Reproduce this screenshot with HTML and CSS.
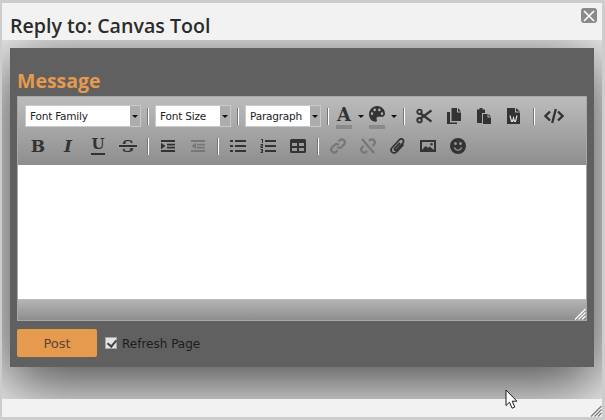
FILE: index.html
```html
<!DOCTYPE html>
<html>
<head>
  <title>Reply to: Canvas Tool</title>
  <link rel="stylesheet" href="styles.css">
</head>
<body>
  <div class="dialog">
    <div class="dialog-head">
      <h1>Reply to: Canvas Tool</h1>
      <button class="close" type="button">
        <svg width="12" height="12" viewBox="0 0 12 12"><path d="M1 1l10 10M11 1L1 11" stroke="#fff" stroke-width="1.6" fill="none"/></svg>
      </button>
    </div>
    <div class="dialog-body">
      <form class="panel">
        <h2>Message</h2>
        <div class="editor">
          <div class="toolbar">
            <div class="tool-row">
              <div class="select wide"><span>Font Family</span><i class="select-arrow"></i></div>
              <b class="sep"></b>
              <div class="select"><span>Font Size</span><i class="select-arrow"></i></div>
              <b class="sep"></b>
              <div class="select"><span>Paragraph</span><i class="select-arrow"></i></div>
              <b class="sep"></b>
              <div class="split">
                <span class="swatch"><span class="glyph glyph-a">A</span></span>
                <i class="caret"></i>
              </div>
              <div class="split">
                <span class="swatch">
                  <svg width="16" height="16" viewBox="0 0 16 14.200" preserveAspectRatio="none"><path fill-rule="evenodd" d="M8 0C3.600 0 0 3.300 0 7.400 0 11 2.900 14 6.400 14c1.600 0 1.900-1 1.300-2-.6-1.100 0-2.400 1.500-2.400h3.300C14.700 9.600 16 8.400 16 6.600 16 2.900 12.400 0 8 0zM3 8a1.200 1.200 0 1 1 0-2.400A1.200 1.200 0 0 1 3 8zm2.700-3.300a1.200 1.200 0 1 1 0-2.400 1.200 1.200 0 0 1 0 2.400zm4.600 0a1.200 1.200 0 1 1 0-2.400 1.200 1.200 0 0 1 0 2.400zM13 8a1.200 1.200 0 1 1 0-2.400A1.200 1.200 0 0 1 13 8z" fill="#333"/></svg>
                </span>
                <i class="caret"></i>
              </div>
              <b class="sep"></b>
              <span class="btn"><svg width="16" height="16" viewBox="0 0 16 16"><path d="M4.500 5.500L15.500 13.500M4.500 10.500L15.500 2.500" stroke="#333" stroke-width="2.200" fill="none"/><circle cx="3.500" cy="3.800" r="2.200" stroke="#333" stroke-width="1.900" fill="none"/><circle cx="3.500" cy="12.200" r="2.200" stroke="#333" stroke-width="1.900" fill="none"/></svg></span>
              <span class="btn"><svg width="16" height="16" viewBox="0 0 16 16"><path d="M5.500 0h5.500v4.500h4V13H5.500z" fill="#333"/><path d="M12 0l3 3.500h-3z" fill="#333"/><path d="M1 4h3v10.500h7V16H1z" fill="#333"/></svg></span>
              <span class="btn"><svg width="16" height="16" viewBox="0 0 16 16"><path d="M1 1.500h2.500V0h3v1.500H9V5H6v10H1z" fill="#333"/><path d="M7 6h4.500v3.500H15V16H7z" fill="#333"/><path d="M12.500 6L15 8.500h-2.500z" fill="#333"/></svg></span>
              <span class="btn"><svg width="16" height="16" viewBox="0 0 16 16"><path d="M1 0h8v4.500h5V16H1z" fill="#333"/><path d="M10 0l4 3.500h-4z" fill="#333"/><path d="M4 7.500l1.500 6h1L7.500 10l1 3.500h1l1.500-6" fill="none" stroke="#ddd" stroke-width="1.200"/></svg></span>
              <b class="sep"></b>
              <span class="btn"><svg width="20" height="16" viewBox="0 0 20 16"><path d="M6 3.500L1.500 8 6 12.500M14 3.500L18.500 8 14 12.500M11.800 1L8.200 15" stroke="#333" stroke-width="2.300" fill="none"/></svg></span>
            </div>
            <div class="tool-row">
              <span class="btn"><span class="glyph">B</span></span>
              <span class="btn"><span class="glyph glyph-i">I</span></span>
              <span class="btn"><span class="glyph glyph-u">U</span></span>
              <span class="btn"><span class="glyph glyph-s">S</span></span>
              <b class="sep"></b>
              <span class="btn"><svg width="16" height="16" viewBox="0 0 16 16"><path d="M1 2h14v2H1zM7 5.800h8v1.700H7zM7 8.800h8v1.700H7zM1 12h14v2H1zM1 4.800L5.500 8 1 11.200z" fill="#333"/></svg></span>
              <span class="btn off"><svg width="16" height="16" viewBox="0 0 16 16"><path d="M1 2h14v2H1zM7 5.800h8v1.700H7zM7 8.800h8v1.700H7zM1 12h14v2H1zM6 4.800L1.500 8 6 11.200z" fill="#777"/></svg></span>
              <b class="sep"></b>
              <span class="btn"><svg width="16" height="16" viewBox="0 0 16 16"><path d="M5 2h11v2H5zM5 7h11v2H5zM5 12h11v2H5z" fill="#333"/><path d="M0 2h3v2H0zM0 7h3v2H0zM0 12h3v2H0z" fill="#333"/></svg></span>
              <span class="btn"><svg width="16" height="16" viewBox="0 0 16 16"><path d="M5 2h11v2H5zM5 7h11v2H5zM5 12h11v2H5z" fill="#333"/><path d="M1 1h2v4H2V2H1zM.5 6H3v2.500H1.500V9H3v1H.5V7.500H2V7H.5zM.5 11H3v4H.5v-1H2v-.5H1v-1h1V12H.5z" fill="#333"/></svg></span>
              <span class="btn"><svg width="16" height="16" viewBox="0 0 16 16"><path fill-rule="evenodd" d="M1.500 1h13A1.500 1.500 0 0 1 16 2.500v11a1.500 1.500 0 0 1-1.500 1.500h-13A1.500 1.500 0 0 1 0 13.500v-11A1.500 1.500 0 0 1 1.500 1zM2 5v3h5V5zM9 5v3h5V5zM2 10v3h5v-3zM9 10v3h5v-3z" fill="#333"/></svg></span>
              <b class="sep"></b>
              <span class="btn off"><svg width="16" height="16" viewBox="0 0 16 16"><g stroke="#777" stroke-width="2.200" fill="none"><path d="M8.500 3.500l1.500-1.500a3 3 0 0 1 4.200 4.200L11.500 9a3 3 0 0 1-4.200 0"/><path d="M7.500 12.500L6 14a3 3 0 0 1-4.200-4.200L4.500 7a3 3 0 0 1 4.200 0"/></g></svg></span>
              <span class="btn off"><svg width="16" height="16" viewBox="0 0 16 16"><g stroke="#777" stroke-width="2.200" fill="none"><path d="M9 3l1-1a3 3 0 0 1 4.200 4.200L12.500 8"/><path d="M7 13l-1 1a3 3 0 0 1-4.200-4.200L3.500 8"/><path d="M2 1l12 14"/></g></svg></span>
              <span class="btn"><svg width="16" height="16" viewBox="0 0 16 16"><path d="M13.500 6.500L7 13.500c-1.500 1.700-4 1.800-5.200.5C.7 12.800.8 11 2.200 9.500l7-7.500c1.100-1.200 2.700-1.300 3.700-.4s.9 2.400-.1 3.500l-6 6.600c-.6.700-1.500.7-2 .2s-.4-1.200.2-1.900L10 5" stroke="#333" stroke-width="1.800" fill="none"/></svg></span>
              <span class="btn"><svg width="16" height="16" viewBox="0 0 16 16"><path fill-rule="evenodd" d="M0 2h16v12H0zM2 4v8l3.500-4 2.500 2 1.500-1.500L14 12V4zM11.500 5a1.300 1.300 0 1 1 0 2.600 1.300 1.300 0 0 1 0-2.600z" fill="#333"/></svg></span>
              <span class="btn"><svg width="16" height="16" viewBox="0 0 16 16"><path fill-rule="evenodd" d="M8 0a8 8 0 1 1 0 16A8 8 0 0 1 8 0zM5.500 4a1.300 1.500 0 1 0 0 3 1.300 1.500 0 0 0 0-3zm5 0a1.300 1.500 0 1 0 0 3 1.300 1.500 0 0 0 0-3zM3.800 9.500c.5 2 2.200 3.300 4.200 3.300s3.700-1.300 4.200-3.300l-1.300-.300c-.4 1.400-1.500 2.300-2.900 2.300s-2.500-.9-2.900-2.300z" fill="#333"/></svg></span>
            </div>
          </div>
          <div class="edit-area"></div>
          <div class="status">
            <svg class="grip" width="12" height="12" viewBox="0 0 12 12"><path d="M11.500 1L1 11.500M11.500 4.500L4.500 11.500M11.500 8L8 11.500" stroke="#fff" stroke-width="1.100" fill="none"/></svg>
          </div>
        </div>
        <div class="actions">
          <button class="post" type="button">Post</button>
          <label class="refresh"><input type="checkbox" checked> <span>Refresh Page</span></label>
        </div>
      </form>
    </div>
    <div class="dialog-foot">
      <svg class="grip" width="12" height="12" viewBox="0 0 12 12"><path d="M11.500 1L1 11.500M11.500 4.500L4.500 11.500M11.500 8L8 11.500" stroke="#777" stroke-width="1.100" fill="none"/></svg>
    </div>
  </div>
  <svg class="pointer" width="13" height="21" viewBox="0 0 13 21"><path d="M1 1v15.500l3.500-3.300 2.600 6 2.700-1.200-2.600-5.800h4.700z" fill="#fff" stroke="#1a1a2a" stroke-width="1"/></svg>
</body>
</html>
```

FILE: styles.css
```css
* {
  box-sizing: border-box;
}
body {
  margin: 0;
  height: 420px;
  padding: 3px 3px 3px 2px;
  background-color: #cdcdcd;
  overflow: hidden;
  font-family: 'DejaVu Sans', sans-serif;
}
.dialog {
  display: flex;
  flex-direction: column;
  height: 414px;
  background-color: #f2f2f2;
}
.dialog-head {
  display: flex;
  justify-content: space-between;
  height: 37px;
  padding: 5px 5px 0 8px;
}
h1 {
  margin: 4px 0 0;
  font-family: 'Open Sans', sans-serif;
  font-size: 19.6px;
  font-weight: 600;
  line-height: 27px;
  color: #2b2b2b;
}
.close {
  display: flex;
  align-items: center;
  justify-content: center;
  width: 16px;
  height: 15px;
  padding: 0;
  border: 0;
  border-radius: 3px;
  background-color: #8a8a8a;
}
.dialog-body {
  height: 359px;
  padding: 8px;
  overflow: hidden;
}
.panel {
  height: 319px;
  padding: 0 7px;
  background-color: #606060;
  box-shadow: 0 15px 60px 5px rgba(0, 0, 0, 0.7);
}
h2 {
  margin: 0;
  height: 48px;
  padding-top: 19px;
  font-family: 'Open Sans', sans-serif;
  font-size: 19.5px;
  font-weight: 700;
  line-height: 27px;
  color: #e59a4e;
}
.editor {
  width: 570px;
  height: 225px;
  border: 1px solid #a8a8a8;
  display: flex;
  flex-direction: column;
}
.toolbar {
  height: 68px;
  padding: 4px 5px;
  background: linear-gradient(#bcbcbc, #8e8e8e);
}
.tool-row {
  display: flex;
  align-items: center;
  height: 30px;
}
.select {
  display: flex;
  justify-content: space-between;
  width: 76px;
  height: 22px;
  margin: 0 2px;
  border: 1px solid #c9c9c9;
  background-color: #fff;
  font-size: 10.5px;
  letter-spacing: -0.2px;
  line-height: 21px;
  color: #222;
}
.select.wide {
  width: 116px;
}
.select span {
  padding-left: 4px;
}
.select-arrow {
  display: flex;
  align-items: center;
  justify-content: center;
  width: 10px;
  background-color: #adadad;
}
.select-arrow::after,
.caret::after {
  content: "";
  border-top: 3px solid #111;
  border-left: 3px solid transparent;
  border-right: 3px solid transparent;
}
.sep {
  width: 10px;
  height: 17px;
  flex: none;
  background: linear-gradient(#fff, #fff) 5px 0 / 1px 100% no-repeat,
    linear-gradient(#777, #777) 4px 0 / 1px 100% no-repeat;
}
.btn {
  display: flex;
  align-items: center;
  justify-content: center;
  width: 30px;
  height: 30px;
  flex: none;
}
.split {
  display: flex;
  align-items: center;
  width: 33px;
  height: 30px;
  flex: none;
}
.swatch {
  display: flex;
  flex-direction: column;
  align-items: center;
  width: 16px;
  height: 23px;
  margin: 2px 3px 0;
  border-bottom: 4px solid #8a8a8a;
}
.caret {
  display: flex;
  align-items: center;
  justify-content: center;
  width: 11px;
}
.glyph {
  position: relative;
  display: block;
  font-family: 'DejaVu Serif', serif;
  font-weight: 700;
  font-size: 17px;
  line-height: 20px;
  color: #333;
}
.glyph-a {
  font-size: 18px;
  line-height: 17px;
}
.glyph-i {
  font-style: italic;
}
.glyph-u {
  width: 14px;
  height: 18px;
  margin-top: -1px;
  border-bottom: 2px solid #333;
  font-size: 15px;
  line-height: 15px;
  text-align: center;
}
.glyph-s::after {
  content: "";
  position: absolute;
  left: -3px;
  right: -3px;
  top: 9px;
  height: 2px;
  background-color: #333;
  box-shadow: 0 0 0 1px #a0a0a0;
}
.edit-area {
  height: 134px;
  background-color: #fff;
}
.status {
  position: relative;
  flex: 1;
  border-top: 1px solid #bbb;
  background: linear-gradient(#b4b4b4, #8e8e8e);
}
.grip {
  position: absolute;
  right: 0;
  bottom: 0;
}
.actions {
  display: flex;
  align-items: center;
  height: 28px;
  margin-top: 8px;
}
.post {
  width: 80px;
  height: 28px;
  padding: 0;
  border: 0;
  border-radius: 2px;
  background-color: #e59a4e;
  font-family: 'DejaVu Sans', sans-serif;
  font-size: 13px;
  color: #5c4536;
}
.refresh {
  display: flex;
  align-items: center;
  gap: 5px;
  margin-left: 8px;
  font-size: 12px;
  color: #1c1c1c;
}
.refresh span {
  padding-top: 2px;
}
.refresh input {
  position: relative;
  appearance: none;
  width: 12px;
  height: 12px;
  margin: 0;
  border: 1px solid #a5a5a5;
  background-color: #e4e4e4;
}
.refresh input::after {
  content: "";
  position: absolute;
  left: 3px;
  top: 0;
  width: 4px;
  height: 7px;
  border-right: 2px solid #444;
  border-bottom: 2px solid #444;
  transform: rotate(40deg);
}
.dialog-foot {
  position: relative;
  flex: 1;
}
.pointer {
  position: absolute;
  left: 505px;
  top: 389px;
}
```
